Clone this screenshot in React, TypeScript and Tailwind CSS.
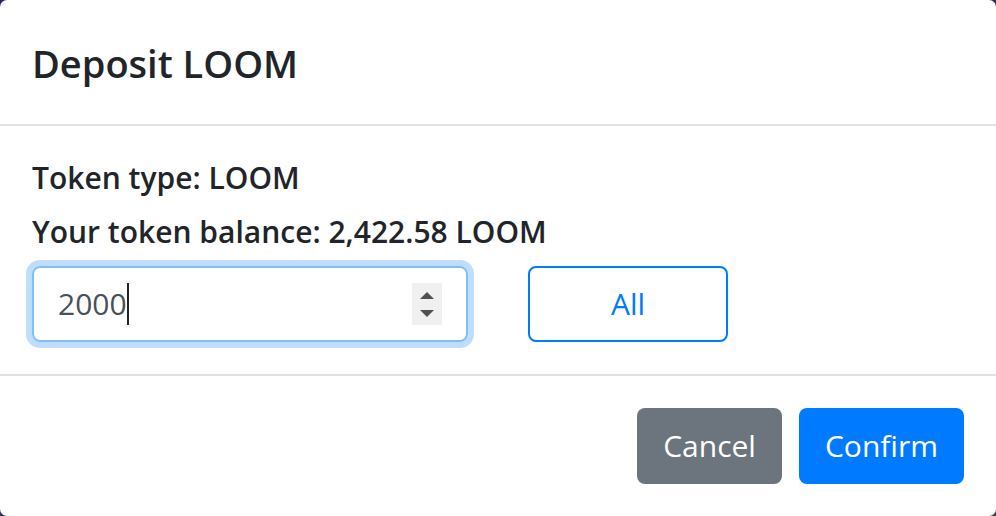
export default function App() {
  return (
    <div className="w-[996px] h-[516px] bg-gradient-to-br from-[#23225a] to-[#3b3b3b]">
      <div className="h-full bg-white rounded-[7px] flex flex-col font-['Open_Sans',sans-serif] text-[#212529]">
        {/* header */}
        <div className="h-[126px] px-8 pt-[39px] border-b-2 border-[#dee2e6]">
          <h5 className="text-[38px] leading-[48px] font-semibold">Deposit LOOM</h5>
        </div>

        {/* body */}
        <div className="h-[250px] px-8 pt-[25px] border-b-2 border-[#dee2e6]">
          <div className="text-[30px] leading-[54px] font-semibold">Token type: LOOM</div>
          <div className="text-[30px] leading-[54px] font-semibold">Your token balance: 2,422.58 LOOM</div>
          <div className="mt-[7px] flex items-center gap-[60px]">
            <div className="w-[436px] h-[76px] rounded-[8px] border-2 border-[#80bdff] shadow-[0_0_0_6px_#bfdeff] flex items-center pl-6 pr-6">
              <div className="flex-1 flex items-center">
                <span className="text-[30px] text-[#495057] leading-none">2000</span>
                <span className="w-[2px] h-[42px] bg-[#222]" />
              </div>
              <div className="w-[30px] h-[42px] bg-[#f0f0f0] flex flex-col items-center justify-center gap-[11px]">
                <svg width="14" height="7" viewBox="0 0 14 7">
                  <path d="M0 7 L7 0 L14 7 Z" fill="#505050" />
                </svg>
                <svg width="14" height="7" viewBox="0 0 14 7">
                  <path d="M0 0 L14 0 L7 7 Z" fill="#505050" />
                </svg>
              </div>
            </div>
            <button className="w-[200px] h-[76px] rounded-[8px] border-2 border-[#007bff] text-[#007bff] text-[30px] leading-none">
              All
            </button>
          </div>
        </div>

        {/* footer */}
        <div className="flex-1 px-8 flex items-center justify-end gap-[17px]">
          <button className="h-[76px] px-[26px] rounded-[8px] bg-[#6c757d] text-white text-[30px] leading-none">
            Cancel
          </button>
          <button className="h-[76px] px-[26px] rounded-[8px] bg-[#007bff] text-white text-[30px] leading-none">
            Confirm
          </button>
        </div>
      </div>
    </div>
  );
}
